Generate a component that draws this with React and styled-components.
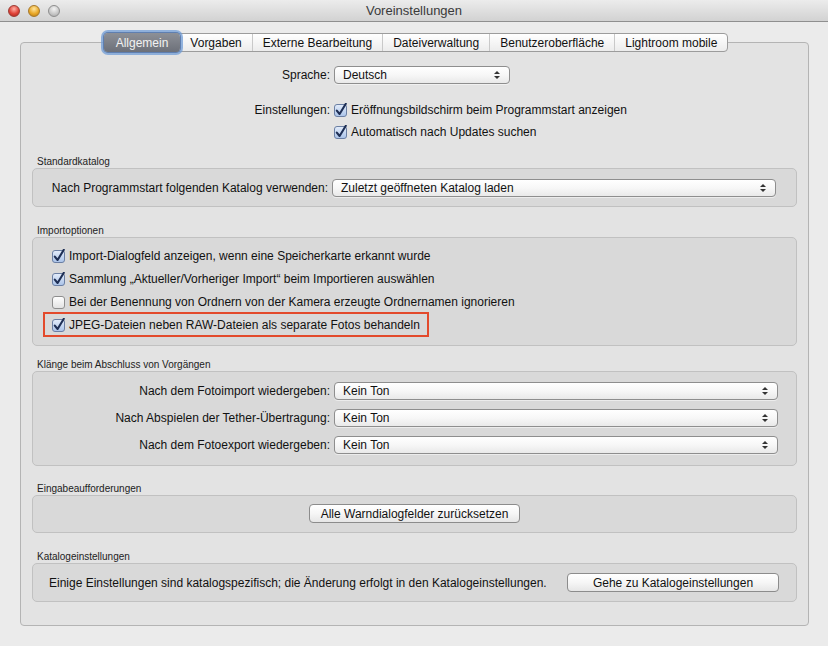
import React from 'react';
import styled, { createGlobalStyle } from 'styled-components';

const GlobalStyle = createGlobalStyle`
    html, body {
        margin: 0;
        padding: 0;
        background: #ececec;
    }
    body {
        font-family: "Liberation Sans", Arial, sans-serif;
        font-size: 12px;
        color: #111;
    }
`;

const Window = styled.div`
    width: 828px;
    height: 646px;
    background: #ebebeb;
    display: flex;
    flex-direction: column;
    overflow: hidden;
`;

const TitleBar = styled.div`
    height: 22px;
    flex: none;
    box-sizing: border-box;
    background: linear-gradient(#ececec, #d2d2d2);
    border-bottom: 1px solid #8f8f8f;
    display: flex;
    align-items: center;
    position: relative;
`;

const Lights = styled.div`
    display: flex;
    gap: 8px;
    padding-left: 8px;
`;

const Light = styled.span`
    width: 12px;
    height: 12px;
    border-radius: 50%;
    box-sizing: border-box;
    border: 1px solid ${p => p.$edge};
    background: radial-gradient(circle at 50% 30%, ${p => p.$hi} 0%, ${p => p.$c} 55%, ${p => p.$lo} 100%);
`;

const Title = styled.div`
    position: absolute;
    left: 0;
    right: 0;
    text-align: center;
    font-size: 13px;
    color: #3a3a3a;
    pointer-events: none;
`;

const Body = styled.div`
    padding: 20px 19px 0 20px;
`;

const Panel = styled.div`
    height: 584px;
    box-sizing: border-box;
    background: #e3e3e3;
    border: 1px solid #b4b4b4;
    border-radius: 4px;
    padding: 0 11px;
    display: flex;
    flex-direction: column;
`;

const TabBar = styled.div`
    align-self: center;
    margin-top: -10px;
    margin-left: 3px;
    height: 19px;
    box-sizing: border-box;
    display: flex;
    background: linear-gradient(#ffffff, #ececec);
    border: 1px solid #9c9c9c;
    border-radius: 4px;
`;

const Tab = styled.div`
    padding: 0 10px;
    display: flex;
    align-items: center;
    font-size: 12px;
    color: ${p => (p.$active ? '#f2f2f2' : '#111')};
    border-left: ${p => (p.$first || p.$active || p.$afterActive ? 'none' : '1px solid #c9c9c9')};
    ${p => p.$active && `
        margin: -1px 0 -1px -1px;
        padding: 0 12px;
        border-radius: 4px;
        background: linear-gradient(#8d9097, #6c7079);
        box-shadow: 0 0 0 1px #5f7fb0, 0 0 0 3px rgba(112, 156, 214, 0.75);
        position: relative;
        z-index: 1;
    `}
`;

const FormRow = styled.div`
    display: grid;
    grid-template-columns: ${p => p.$labelWidth}px 1fr;
    column-gap: 4px;
    align-items: center;
    height: ${p => p.$h}px;
    margin-top: ${p => p.$mt || 0}px;
`;

const FormRows = styled.div`
    display: flex;
    flex-direction: column;
    gap: ${p => p.$gap || 0}px;
`;

const Label = styled.div`
    text-align: right;
    white-space: nowrap;
`;

const Select = styled.div`
    width: ${p => p.$width}px;
    height: 18px;
    box-sizing: border-box;
    border: 1px solid #8e8e8e;
    border-radius: 4px;
    background: linear-gradient(#ffffff 0%, #f7f7f7 50%, #e9e9e9 100%);
    display: flex;
    align-items: center;
    justify-content: space-between;
    padding: 0 9px 0 8px;
    box-shadow: 0 1px 0 rgba(255, 255, 255, 0.5);
`;

const Arrows = styled.span`
    display: flex;
    flex-direction: column;
    gap: 2px;
`;

const Tri = styled.span`
    width: 0;
    height: 0;
    border-left: 3px solid transparent;
    border-right: 3px solid transparent;
    ${p => (p.$up ? 'border-bottom: 3px solid #333;' : 'border-top: 3px solid #333;')}
`;

const CheckRow = styled.div`
    display: flex;
    align-items: center;
    gap: 4px;
    height: ${p => p.$h || 22}px;
    width: fit-content;
    white-space: nowrap;
    padding: ${p => (p.$pad ? '0 9px' : '0')};
    box-sizing: border-box;
    ${p => p.$highlight && 'box-shadow: inset 0 0 0 2px #e34a2c; height: 25px; margin: -1px 0;'}
`;

const SectionTitle = styled.div`
    font-size: 10px;
    line-height: 12px;
    height: 12px;
    color: #222;
    padding-left: 5px;
    margin-top: ${p => p.$mt}px;
`;

const Group = styled.div`
    background: #d9d9d9;
    border: 1px solid #c1c1c1;
    border-radius: 5px;
    padding: ${p => p.$pad};
`;

const Button = styled.div`
    width: ${p => p.$width}px;
    height: 19px;
    box-sizing: border-box;
    border: 1px solid #8c8c8c;
    border-radius: 4px;
    background: linear-gradient(#ffffff 0%, #f6f6f6 50%, #e6e6e6 100%);
    display: flex;
    align-items: center;
    justify-content: center;
    font-size: 12px;
    white-space: nowrap;
    ${p => p.$center && 'margin: 0 auto;'}
`;

const InfoRow = styled.div`
    display: flex;
    align-items: center;
    justify-content: space-between;
    padding: 0 17px 0 16px;
`;

function CheckBox({ checked }) {
    return (
        <svg width="13" height="14" viewBox="0 0 13 14" style={{ flex: 'none' }}>
            <defs>
                <linearGradient id="cbOn" x1="0" y1="0" x2="0" y2="1">
                    <stop offset="0" stopColor="#e4edfb" />
                    <stop offset="1" stopColor="#a9c2e8" />
                </linearGradient>
                <linearGradient id="cbOff" x1="0" y1="0" x2="0" y2="1">
                    <stop offset="0" stopColor="#ffffff" />
                    <stop offset="1" stopColor="#e2e2e2" />
                </linearGradient>
            </defs>
            <rect x="0.5" y="1.5" width="12" height="12" rx="2.5" fill={checked ? 'url(#cbOn)' : 'url(#cbOff)'} stroke={checked ? '#6b7fa3' : '#8e8e8e'} />
            {checked && (
                <path d="M2.8 7.6 L5.6 11 L11.8 0.8" fill="none" stroke="#1e2f55" strokeWidth="2.1" strokeLinecap="round" strokeLinejoin="round" />
            )}
        </svg>
    );
}

function Dropdown({ value, width }) {
    return (
        <Select $width={width}>
            <span>{value}</span>
            <Arrows>
                <Tri $up />
                <Tri />
            </Arrows>
        </Select>
    );
}

const tabs = ['Allgemein', 'Vorgaben', 'Externe Bearbeitung', 'Dateiverwaltung', 'Benutzeroberfläche', 'Lightroom mobile'];

const importRows = [
    { text: 'Import-Dialogfeld anzeigen, wenn eine Speicherkarte erkannt wurde', checked: true },
    { text: 'Sammlung „Aktueller/Vorheriger Import“ beim Importieren auswählen', checked: true },
    { text: 'Bei der Benennung von Ordnern von der Kamera erzeugte Ordnernamen ignorieren', checked: false },
    { text: 'JPEG-Dateien neben RAW-Dateien als separate Fotos behandeln', checked: true, highlight: true },
];

const soundRows = [
    'Nach dem Fotoimport wiedergeben:',
    'Nach Abspielen der Tether-Übertragung:',
    'Nach dem Fotoexport wiedergeben:',
];

export default function App() {
    return (
        <Window>
            <GlobalStyle />
            <TitleBar>
                <Lights>
                    <Light $c="#e0443a" $hi="#ffb1a6" $lo="#a8251c" $edge="#9c3a33" />
                    <Light $c="#e9a92a" $hi="#ffe6a0" $lo="#b57910" $edge="#a6782a" />
                    <Light $c="#c9c9c9" $hi="#f4f4f4" $lo="#a3a3a3" $edge="#8e8e8e" />
                </Lights>
                <Title>Voreinstellungen</Title>
            </TitleBar>
            <Body>
                <Panel>
                    <TabBar>
                        {tabs.map((t, i) => (
                            <Tab key={t} $active={i === 0} $first={i === 0} $afterActive={i === 1}>{t}</Tab>
                        ))}
                    </TabBar>

                    <FormRow $labelWidth={298} $h={18} $mt={14}>
                        <Label>Sprache:</Label>
                        <Dropdown value="Deutsch" width={176} />
                    </FormRow>
                    <FormRow $labelWidth={298} $h={22} $mt={15}>
                        <Label>Einstellungen:</Label>
                        <CheckRow>
                            <CheckBox checked />
                            Eröffnungsbildschirm beim Programmstart anzeigen
                        </CheckRow>
                    </FormRow>
                    <FormRow $labelWidth={298} $h={22}>
                        <span />
                        <CheckRow>
                            <CheckBox checked />
                            Automatisch nach Updates suchen
                        </CheckRow>
                    </FormRow>

                    <SectionTitle $mt={13}>Standardkatalog</SectionTitle>
                    <Group $pad="10px 18px 9px 10px">
                        <FormRow $labelWidth={285} $h={18}>
                            <Label>Nach Programmstart folgenden Katalog verwenden:</Label>
                            <Dropdown value="Zuletzt geöffneten Katalog laden" width={444} />
                        </FormRow>
                    </Group>

                    <SectionTitle $mt={18}>Importoptionen</SectionTitle>
                    <Group $pad="6px 10px 9px 10px">
                        <FormRows>
                            {importRows.map(r => (
                                <CheckRow key={r.text} $h={23} $pad $highlight={r.highlight}>
                                    <CheckBox checked={r.checked} />
                                    {r.text}
                                </CheckRow>
                            ))}
                        </FormRows>
                    </Group>

                    <SectionTitle $mt={13}>Klänge beim Abschluss von Vorgängen</SectionTitle>
                    <Group $pad="10px 18px 11px 10px">
                        <FormRows $gap={9}>
                            {soundRows.map(l => (
                                <FormRow key={l} $labelWidth={287} $h={18}>
                                    <Label>{l}</Label>
                                    <Dropdown value="Kein Ton" width={444} />
                                </FormRow>
                            ))}
                        </FormRows>
                    </Group>

                    <SectionTitle $mt={17}>Eingabeaufforderungen</SectionTitle>
                    <Group $pad="8px 10px 9px 10px">
                        <Button $width={211} $center>Alle Warndialogfelder zurücksetzen</Button>
                    </Group>

                    <SectionTitle $mt={18}>Katalogeinstellungen</SectionTitle>
                    <Group $pad="9px 0 9px 0">
                        <InfoRow>
                            <span>Einige Einstellungen sind katalogspezifisch; die Änderung erfolgt in den Katalogeinstellungen.</span>
                            <Button $width={212}>Gehe zu Katalogeinstellungen</Button>
                        </InfoRow>
                    </Group>
                </Panel>
            </Body>
        </Window>
    );
}
